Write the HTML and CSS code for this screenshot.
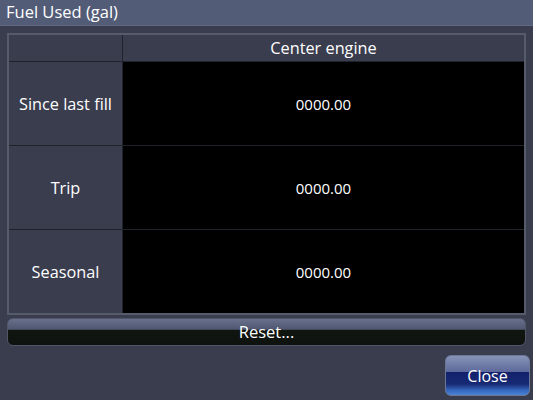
FILE: index.html
```html
<!DOCTYPE html>
<html>
<head>
<meta charset="utf-8">
<link rel="stylesheet" href="styles.css">
</head>
<body>
<div class="screen">
  <div class="titlebar">Fuel Used (gal)</div>
  <div class="table">
    <div class="cell head"></div>
    <div class="cell head">Center engine</div>
    <div class="cell label">Since last fill</div>
    <div class="cell value">0000.00</div>
    <div class="cell label">Trip</div>
    <div class="cell value">0000.00</div>
    <div class="cell label">Seasonal</div>
    <div class="cell value">0000.00</div>
  </div>
  <div class="reset"><span>Reset...</span></div>
  <div class="footer">
    <div class="close">Close</div>
  </div>
</div>
</body>
</html>
```

FILE: styles.css
```css
html, body {
  margin: 0;
  padding: 0;
  background: #3a3d4e;
}
.screen {
  width: 533px;
  height: 400px;
  overflow: hidden;
  font-family: "Open Sans", "DejaVu Sans", sans-serif;
  color: #fff;
  background: #3a3d4e;
  display: flex;
  flex-direction: column;
}
.titlebar {
  height: 25px;
  line-height: 24px;
  padding-left: 6px;
  font-size: 16.5px;
  background: #535c77;
  border-bottom: 1px solid #606984;
}
.table {
  margin: 7px 7px 0 7px;
  border: 2px solid #565b6c;
  background: #20232c;
  display: grid;
  grid-template-columns: 113px 1fr;
  grid-template-rows: 26px 83px 83px 83px;
  gap: 1px;
}
.cell {
  display: flex;
  align-items: center;
  justify-content: center;
  font-size: 16.3px;
}
.head {
  background: #3a3d4e;
}
.label {
  background: #3a3d4e;
}
.value {
  background: #000;
  font-size: 15px;
}
.reset {
  margin: 3px 7px 0 7px;
  height: 26px;
  border: 1px solid #50556a;
  border-radius: 6px;
  background: linear-gradient(to bottom, #68708c 0%, #4f5670 40%, #101510 42%, #0e130f 100%);
  display: flex;
  align-items: center;
  justify-content: center;
  font-size: 16.5px;
}
.reset span {
  position: relative;
  top: -1px;
}
.footer {
  display: flex;
  justify-content: flex-end;
  padding: 9px 3px 0 0;
}
.close {
  width: 83px;
  height: 39px;
  border: 1px solid #6d7897;
  border-radius: 6px;
  background: linear-gradient(to bottom, #8793b6 0%, #5d6a9c 40%, #13216b 42%, #172a74 72%, #3568c0 88%, #4b82d2 100%);
  display: flex;
  align-items: center;
  justify-content: center;
  font-size: 16px;
}
```
